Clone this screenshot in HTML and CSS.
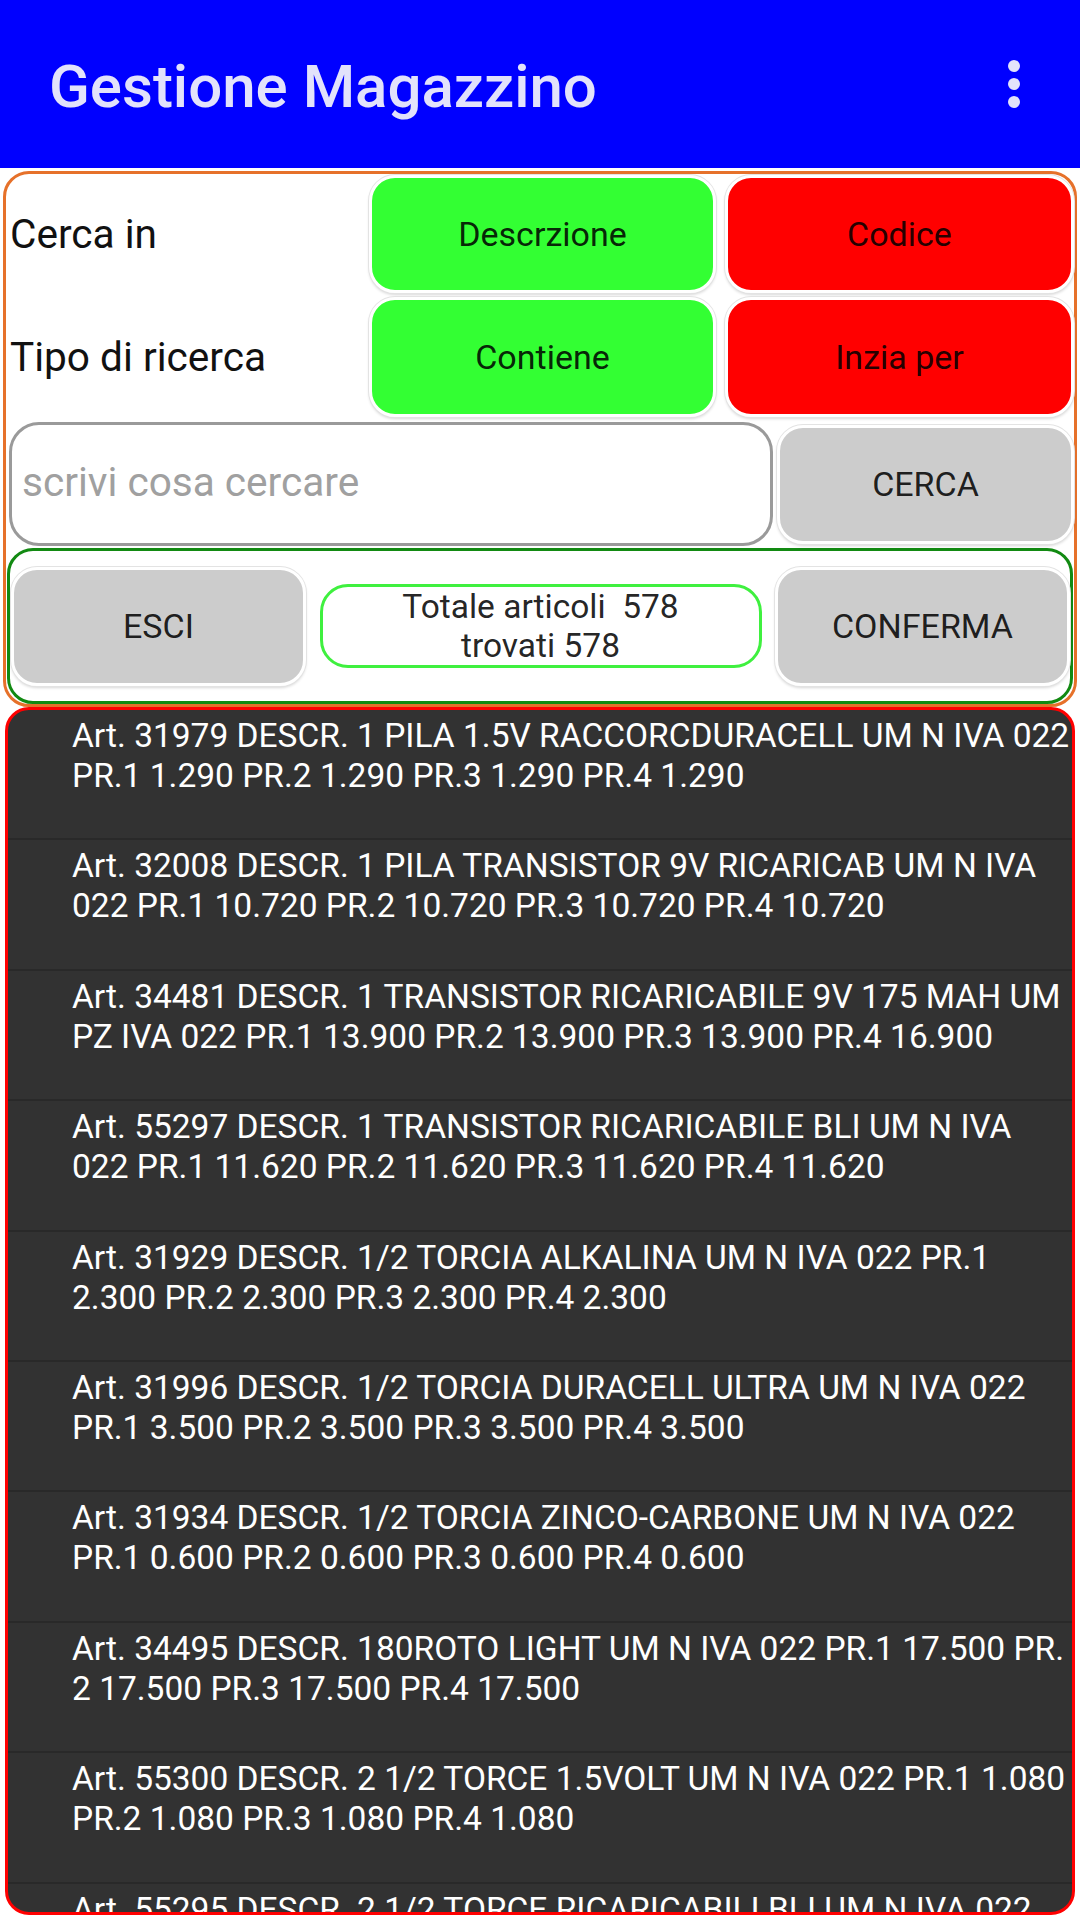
FILE: index.html
```html
<!DOCTYPE html>
<html lang="it">
  <head>
    <meta charset="UTF-8" />
    <meta name="viewport" content="width=device-width, initial-scale=1.0" />
    <title>Gestione Magazzino</title>
    <link rel="stylesheet" href="styles.css">
  </head>
  <body>
    <!-- barra superiore -->
    <header class="appbar">
      <h1 class="appbar-title">Gestione Magazzino</h1>
      <svg class="appbar-menu" width="72" height="72" viewBox="0 0 72 72">
        <circle cx="36" cy="18" r="6" />
        <circle cx="36" cy="36" r="6" />
        <circle cx="36" cy="54" r="6" />
      </svg>
    </header>

    <main class="content">
      <!-- pannello di ricerca -->
      <section class="search-panel">
        <div class="option-row">
          <span class="option-label">Cerca in</span>
          <button class="btn btn-green">Descrzione</button>
          <button class="btn btn-red">Codice</button>
        </div>
        <div class="option-row">
          <span class="option-label">Tipo di ricerca</span>
          <button class="btn btn-green">Contiene</button>
          <button class="btn btn-red">Inzia per</button>
        </div>
        <div class="search-row">
          <input type="text" class="search-input" placeholder="scrivi cosa cercare" />
          <button class="btn btn-grey btn-search">CERCA</button>
        </div>
        <div class="action-box">
          <button class="btn btn-grey btn-action">ESCI</button>
          <div class="totals">Totale articoli  578<br>trovati 578</div>
          <button class="btn btn-grey btn-action">CONFERMA</button>
        </div>
      </section>

      <!-- elenco articoli -->
      <ul class="article-list">
        <li class="article">
          <span>Art. 31979 DESCR. 1 PILA 1.5V RACCORCDURACELL UM N IVA 022</span>
          <span>PR.1 1.290 PR.2 1.290 PR.3 1.290 PR.4 1.290</span>
        </li>
        <li class="article">
          <span>Art. 32008 DESCR. 1 PILA TRANSISTOR 9V RICARICAB UM N IVA</span>
          <span>022 PR.1 10.720 PR.2 10.720 PR.3 10.720 PR.4 10.720</span>
        </li>
        <li class="article">
          <span>Art. 34481 DESCR. 1 TRANSISTOR RICARICABILE 9V 175 MAH UM</span>
          <span>PZ IVA 022 PR.1 13.900 PR.2 13.900 PR.3 13.900 PR.4 16.900</span>
        </li>
        <li class="article">
          <span>Art. 55297 DESCR. 1 TRANSISTOR RICARICABILE BLI UM N IVA</span>
          <span>022 PR.1 11.620 PR.2 11.620 PR.3 11.620 PR.4 11.620</span>
        </li>
        <li class="article">
          <span>Art. 31929 DESCR. 1/2 TORCIA ALKALINA UM N IVA 022 PR.1</span>
          <span>2.300 PR.2 2.300 PR.3 2.300 PR.4 2.300</span>
        </li>
        <li class="article">
          <span>Art. 31996 DESCR. 1/2 TORCIA DURACELL ULTRA UM N IVA 022</span>
          <span>PR.1 3.500 PR.2 3.500 PR.3 3.500 PR.4 3.500</span>
        </li>
        <li class="article">
          <span>Art. 31934 DESCR. 1/2 TORCIA ZINCO-CARBONE UM N IVA 022</span>
          <span>PR.1 0.600 PR.2 0.600 PR.3 0.600 PR.4 0.600</span>
        </li>
        <li class="article">
          <span>Art. 34495 DESCR. 180ROTO LIGHT UM N IVA 022 PR.1 17.500 PR.</span>
          <span>2 17.500 PR.3 17.500 PR.4 17.500</span>
        </li>
        <li class="article">
          <span>Art. 55300 DESCR. 2 1/2 TORCE 1.5VOLT UM N IVA 022 PR.1 1.080</span>
          <span>PR.2 1.080 PR.3 1.080 PR.4 1.080</span>
        </li>
        <li class="article">
          <span>Art. 55295 DESCR. 2 1/2 TORCE RICARICABILI BLI UM N IVA 022</span>
          <span>PR.1 9.900 PR.2 9.900 PR.3 9.900 PR.4 9.900</span>
        </li>
      </ul>
    </main>
  </body>
</html>
```

FILE: styles.css
```css
/* pagina */
body {
  margin: 0;
  width: 1080px;
  height: 1920px;
  overflow: hidden;
  background-color: #fff;
  font-family: "Roboto", "Liberation Sans", sans-serif;
}

/* barra superiore */
.appbar {
  height: 168px;
  background-color: #0000ff;
  display: flex;
  align-items: center;
  justify-content: space-between;
}

.appbar-title {
  margin: 0 0 0 49px;
  padding-top: 5px;
  font-size: 60px;
  font-weight: 500;
  color: #e2e2fb;
}

.appbar-menu {
  margin-right: 30px;
  fill: #e2e2fb;
}

.content {
  padding: 3px 3px 0;
}

/* pannello ricerca */
.search-panel {
  border: 3px solid #e6712a;
  border-radius: 26px;
  padding: 1px 0 0 0;
}

.option-row {
  display: flex;
  align-items: center;
  height: 118px;
}

.option-row + .option-row {
  margin-top: 4px;
  height: 120px;
}

.option-label {
  flex: 1;
  padding-left: 4px;
  font-size: 40.6px;
  color: #111;
}

/* pulsanti */
.btn {
  box-sizing: border-box;
  height: 100%;
  padding: 0;
  border: 3px solid #fff;
  border-radius: 26px;
  box-shadow: 0 0 0 1px #e3e3e3, 0 2px 3px rgba(0, 0, 0, 0.16);
  font-family: "Roboto", "Liberation Sans", sans-serif;
  font-size: 34px;
  color: rgba(0, 0, 0, 0.87);
}

.option-row .btn:nth-of-type(1) {
  width: 347px;
}

.option-row .btn:nth-of-type(2) {
  width: 349px;
  margin-left: 9px;
}

.btn-green {
  background-color: #33ff33;
}

.btn-red {
  background-color: #ff0000;
}

.btn-grey {
  background-color: #cccccc;
}

/* riga di ricerca */
.search-row {
  display: flex;
  align-items: center;
  margin-top: 5px;
  padding-left: 3px;
  height: 124px;
}

.search-input {
  box-sizing: border-box;
  width: 764px;
  height: 124px;
  padding: 0 0 4px 10px;
  border: 3px solid #9a9a9a;
  border-radius: 30px;
  font-family: "Roboto", "Liberation Sans", sans-serif;
  font-size: 40.6px;
  outline: none;
}

.search-input::placeholder {
  color: #a0a0a0;
}

.btn-search {
  width: 297px;
  height: 119px;
  margin-left: 4px;
}

/* riquadro azioni */
.action-box {
  box-sizing: border-box;
  height: 156px;
  margin: 2px 1px 0;
  border: 3px solid #128a12;
  border-radius: 26px;
  padding: 0 0 0 1px;
  display: flex;
  align-items: center;
  justify-content: space-between;
}

.btn-action {
  width: 295px;
  height: 119px;
}

.totals {
  box-sizing: border-box;
  width: 442px;
  height: 84px;
  border: 3px solid #3ff03f;
  border-radius: 28px;
  display: flex;
  align-items: center;
  justify-content: center;
  text-align: center;
  white-space: pre;
  font-size: 33.5px;
  line-height: 39px;
  color: rgba(0, 0, 0, 0.87);
}

/* elenco articoli */
.article-list {
  box-sizing: border-box;
  list-style: none;
  margin: 0 2px;
  padding: 0;
  height: 1208px;
  border: 3px solid #ff0000;
  border-radius: 24px;
  background-color: #323232;
  overflow: hidden;
}

.article {
  box-sizing: border-box;
  height: 130.4px;
  padding: 6px 0 0 64px;
  border-bottom: 2px solid #292929;
  white-space: nowrap;
  font-size: 33.5px;
  line-height: 40px;
  color: #fff;
}

.article span {
  display: block;
}
```
